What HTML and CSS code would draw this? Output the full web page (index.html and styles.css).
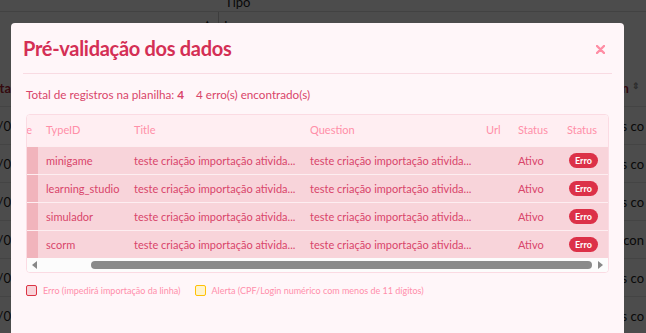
FILE: index.html
```html
<!DOCTYPE html>
<html lang="pt-BR">
<head>
  <meta charset="UTF-8" />
  <meta name="viewport" content="width=device-width, initial-scale=1.0" />
  <title>Importação de atividades</title>
  <link rel="stylesheet" href="styles.css">
</head>
<body>
  <div class="page">
    <div class="filter-labels">
      <span class="filter-label">Tipo</span>
    </div>
    <div class="filter-inputs">
      <div class="filter-select"><span class="caret">▴</span></div>
      <div class="filter-input">I</div>
    </div>

    <div class="list">
      <div class="list-row list-head">
        <div class="cell-start">Data</div>
        <div class="cell-mid"></div>
        <div class="cell-end">Criado em <span class="sort">⇕</span></div>
      </div>
      <div class="list-row">
        <div class="cell-start">12/0</div>
        <div class="cell-mid"></div>
        <div class="cell-end">Vídeos co</div>
      </div>
      <div class="list-row">
        <div class="cell-start">12/0</div>
        <div class="cell-mid"></div>
        <div class="cell-end">Vídeos co</div>
      </div>
      <div class="list-row">
        <div class="cell-start">12/0</div>
        <div class="cell-mid"></div>
        <div class="cell-end">Vídeos co</div>
      </div>
      <div class="list-row">
        <div class="cell-start">12/0</div>
        <div class="cell-mid"></div>
        <div class="cell-end">Vídeo con</div>
      </div>
      <div class="list-row">
        <div class="cell-start">12/0</div>
        <div class="cell-mid"></div>
        <div class="cell-end">Vídeos co</div>
      </div>
      <div class="list-row">
        <div class="cell-start">12/0</div>
        <div class="cell-mid"></div>
        <div class="cell-end">Vídeos co</div>
      </div>
    </div>
  </div>

  <div class="backdrop"></div>

  <div class="modal">
    <div class="modal-header">
      <h1>Pré-validação dos dados</h1>
      <span class="close">
        <svg width="9" height="9" viewBox="0 0 9 9"><path d="M1 1L8 8M8 1L1 8" /></svg>
      </span>
    </div>

    <div class="modal-body">
      <p class="summary">
        Total de registros na planilha: <strong>4</strong>
        <span class="error-count">4 erro(s) encontrado(s)</span>
      </p>

      <div class="preview">
        <table class="preview-table">
          <colgroup>
            <col class="w-prev" />
            <col class="w-type" />
            <col class="w-title" />
            <col class="w-question" />
            <col class="w-url" />
            <col class="w-status" />
            <col class="w-result" />
          </colgroup>
          <thead>
            <tr>
              <th class="clipped"><span>Type</span></th>
              <th>TypeID</th>
              <th>Title</th>
              <th>Question</th>
              <th>Url</th>
              <th>Status</th>
              <th>Status</th>
            </tr>
          </thead>
          <tbody>
            <tr>
              <td class="clipped"></td>
              <td>minigame</td>
              <td>teste criação importação ativida...</td>
              <td>teste criação importação ativida...</td>
              <td></td>
              <td>Ativo</td>
              <td><span class="badge">Erro</span></td>
            </tr>
            <tr>
              <td class="clipped"></td>
              <td>learning_studio</td>
              <td>teste criação importação ativida...</td>
              <td>teste criação importação ativida...</td>
              <td></td>
              <td>Ativo</td>
              <td><span class="badge">Erro</span></td>
            </tr>
            <tr>
              <td class="clipped"></td>
              <td>simulador</td>
              <td>teste criação importação ativida...</td>
              <td>teste criação importação ativida...</td>
              <td></td>
              <td>Ativo</td>
              <td><span class="badge">Erro</span></td>
            </tr>
            <tr>
              <td class="clipped"></td>
              <td>scorm</td>
              <td>teste criação importação ativida...</td>
              <td>teste criação importação ativida...</td>
              <td></td>
              <td>Ativo</td>
              <td><span class="badge">Erro</span></td>
            </tr>
          </tbody>
        </table>

        <div class="hscroll">
          <span class="arrow arrow-left"></span>
          <div class="track"><div class="thumb"></div></div>
          <span class="arrow arrow-right"></span>
        </div>
      </div>

      <div class="legend">
        <div class="legend-item">
          <span class="swatch swatch-error"></span>
          Erro (impedirá importação da linha)
        </div>
        <div class="legend-item">
          <span class="swatch swatch-alert"></span>
          Alerta (CPF/Login numérico com menos de 11 dígitos)
        </div>
      </div>
    </div>
  </div>
</body>
</html>
```

FILE: styles.css
```css
body {
  margin: 0;
  background-color: #fff;
  font-family: 'Lato', 'Open Sans', sans-serif;
  overflow: hidden;
}

/* page behind the modal */
.page {
  width: 646px;
  color: #222;
  font-size: 13px;
}

.filter-labels {
  height: 11px;
  border-bottom: 1px solid #ddd;
  overflow: hidden;
}

.filter-label {
  display: block;
  margin-left: 225px;
  line-height: 11px;
  margin-top: -3px;
}

.filter-inputs {
  display: flex;
  height: 40px;
}

.filter-select {
  width: 219px;
  border-right: 1px solid #ccc;
  display: flex;
  justify-content: flex-end;
  padding-right: 8px;
  box-sizing: border-box;
  font-size: 9px;
  padding-top: 4px;
}

.filter-input {
  padding-left: 5px;
  padding-top: 6px;
}

.list {
  margin-top: 17px;
}

.list-row {
  display: flex;
  height: 38px;
  align-items: center;
  border-bottom: 1px solid #e4e4e4;
  box-sizing: border-box;
}

.list-head {
  color: #b02435;
  font-weight: 700;
}

.cell-start {
  width: 11px;
  display: flex;
  justify-content: flex-end;
  overflow: hidden;
  white-space: nowrap;
}

.cell-mid {
  flex: 1;
}

.cell-end {
  width: 22px;
  overflow: hidden;
  white-space: nowrap;
  display: flex;
  justify-content: flex-end;
  padding-right: 2px;
}

.list-head .cell-end {
  padding-right: 6px;
  width: 18px;
}

.sort {
  font-size: 9px;
  color: #999;
  margin-left: 3px;
}

.backdrop {
  position: fixed;
  inset: 0;
  background-color: rgba(0, 0, 0, 0.7);
}

/* modal */
.modal {
  position: absolute;
  top: 23px;
  left: 11px;
  width: 613px;
  height: 330px;
  background-color: #fff6f9;
  border-radius: 4px;
}

.modal-header {
  margin: 0 12px;
  height: 50px;
  border-bottom: 1px solid #f9dbe3;
  display: flex;
  align-items: center;
  justify-content: space-between;
}

.modal-header h1 {
  margin: 0;
  font-size: 20px;
  font-weight: 700;
  letter-spacing: -0.3px;
  color: #d42f55;
}

.close {
  display: flex;
  margin-right: 7px;
  margin-top: 2px;
}

.close svg {
  stroke: #ff8da4;
  stroke-width: 2.4;
  stroke-linecap: round;
}

.modal-body {
  padding: 0 15px;
}

.summary {
  margin: 0;
  padding-top: 13px;
  height: 27px;
  font-size: 11.7px;
  color: #d9456a;
}

.summary strong {
  font-weight: 700;
}

.error-count {
  margin-left: 9px;
}

.preview {
  border: 1px solid #fbdbe3;
  border-radius: 4px;
  overflow: hidden;
  background-color: #fff;
}

.preview-table {
  width: 100%;
  table-layout: fixed;
  border-collapse: separate;
  border-spacing: 0;
  font-size: 11px;
}

.w-prev { width: 11px; }
.w-type { width: 88px; }
.w-title { width: 176px; }
.w-question { width: 176px; }
.w-url { width: 32px; }
.w-status { width: 49px; }
.w-result { width: 49px; }

.preview-table th {
  padding: 8px 8px 9px;
  line-height: 14px;
  text-align: left;
  font-weight: 400;
  color: #ff8fa8;
  background-color: #ffeef2;
}

.preview-table td {
  padding: 6px 8px;
  line-height: 15px;
  color: #d9456a;
  background-color: #f8d4da;
  border-top: 1px solid #fdeef1;
  white-space: nowrap;
  overflow: hidden;
}

.preview-table .clipped {
  padding-left: 0;
  padding-right: 0;
  overflow: hidden;
}

.preview-table th.clipped span {
  display: flex;
  justify-content: flex-end;
  padding-right: 6px;
}

.preview-table td.clipped {
  background-color: #f1b4bc;
}

.badge {
  display: inline-block;
  vertical-align: top;
  padding: 0 6px;
  height: 15px;
  line-height: 15px;
  border-radius: 8px;
  background-color: #dc3148;
  color: #fff;
  font-size: 9px;
  font-weight: 700;
  margin-left: 2px;
}

.hscroll {
  display: flex;
  align-items: center;
  height: 14px;
  background-color: #fcfcfc;
}

.arrow {
  width: 0;
  height: 0;
  border-top: 4px solid transparent;
  border-bottom: 4px solid transparent;
}

.arrow-left {
  margin-left: 5px;
  border-right: 5px solid #888;
}

.arrow-right {
  margin-right: 5px;
  border-left: 5px solid #888;
}

.track {
  flex: 1;
  padding: 0 6px 0 54px;
}

.thumb {
  height: 8px;
  border-radius: 4px;
  background-color: #8a8a8a;
}

.legend {
  display: flex;
  gap: 14px;
  margin-top: 12px;
  font-size: 9px;
  color: #ff8fab;
}

.legend-item {
  display: flex;
  align-items: center;
  gap: 6px;
}

.swatch {
  width: 9px;
  height: 9px;
  border-radius: 2px;
}

.swatch-error {
  border: 1px solid #dc3545;
  background-color: #f8d4da;
}

.swatch-alert {
  border: 1px solid #ffc107;
  background-color: #fff3cd;
}
```
